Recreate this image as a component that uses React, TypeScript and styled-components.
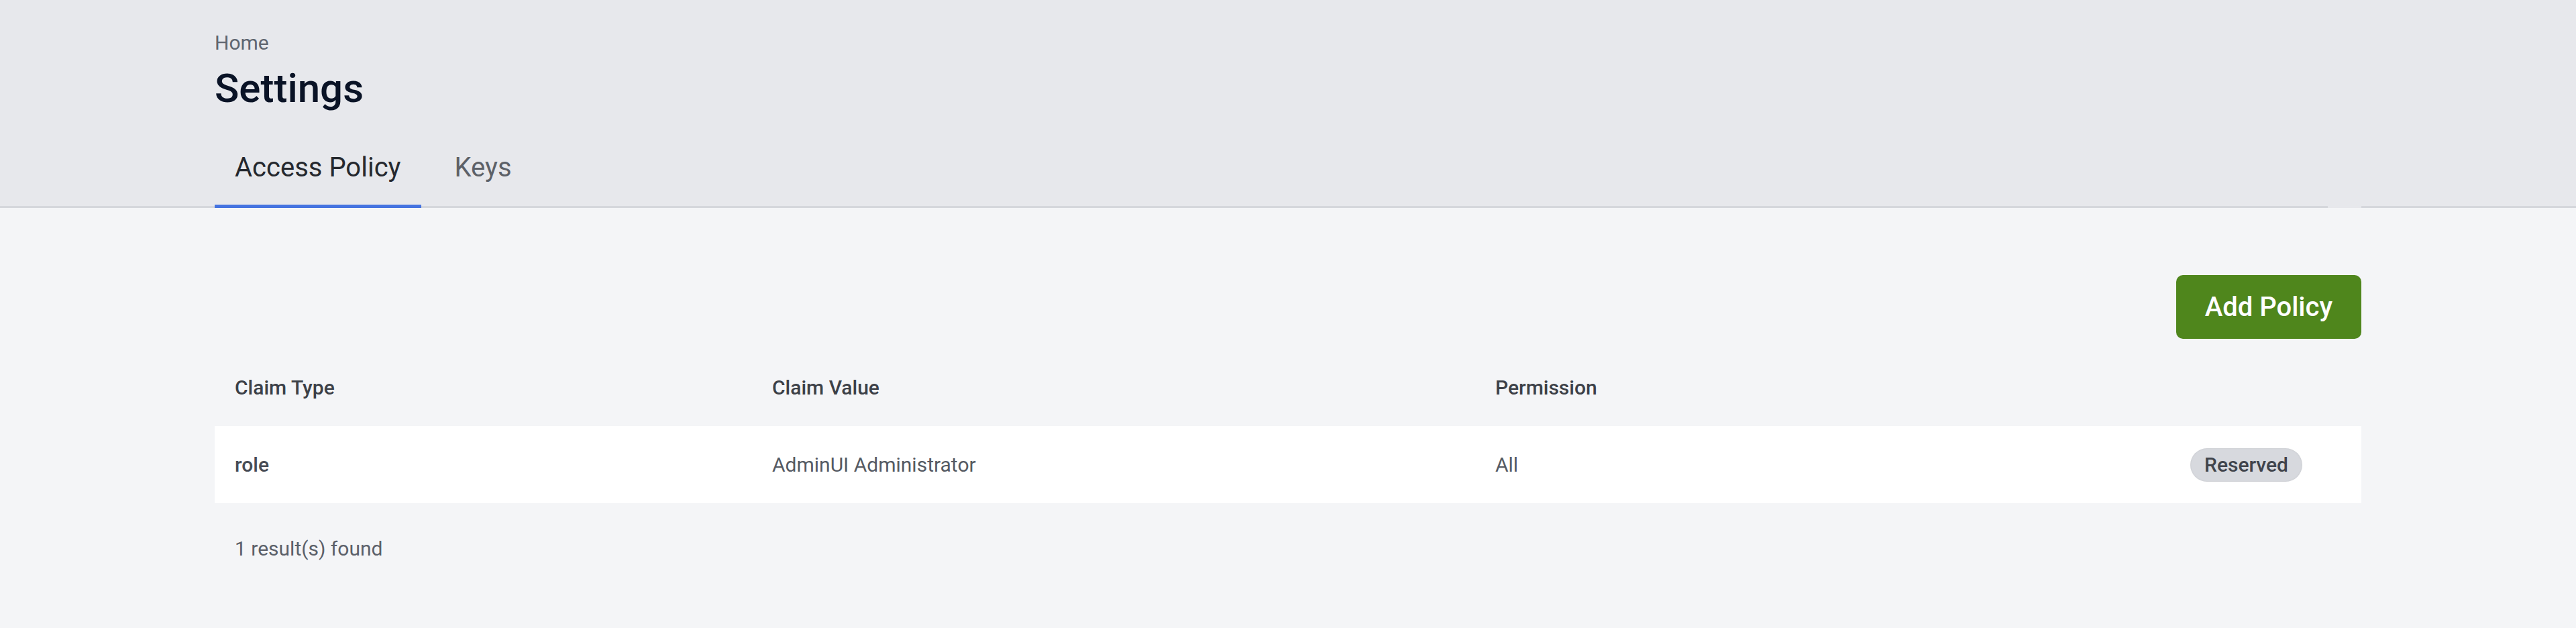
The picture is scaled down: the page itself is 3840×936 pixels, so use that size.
import React from "react";
import styled, { createGlobalStyle } from "styled-components";

const GlobalStyle = createGlobalStyle`
  html, body {
    margin: 0;
    padding: 0;
    background: #f4f5f7;
    font-family: Roboto, "Liberation Sans", Arial, sans-serif;
  }
  * { box-sizing: border-box; }
`;

const Page = styled.div`
  min-height: 936px;
  background: #f4f5f7;
  display: flex;
  flex-direction: column;
`;

const Header = styled.header`
  background: #e7e8ec;
  padding-top: 44px;
`;

const Container = styled.div`
  width: 3200px;
  margin: 0 auto;
`;

const Breadcrumb = styled.div`
  font-size: 30px;
  line-height: 40px;
  color: #5f6670;
`;

const Title = styled.h1`
  margin: 8px 0 0;
  font-size: 60px;
  line-height: 80px;
  font-weight: 500;
  color: #0a1326;
`;

const TabList = styled.div`
  margin-top: 48px;
  margin-bottom: -3px;
  display: flex;
  gap: 20px;
  position: relative;
  z-index: 1;
`;

const Tab = styled.button<{ $active?: boolean }>`
  appearance: none;
  background: none;
  border: 0;
  border-bottom: 5px solid ${(p) => (p.$active ? "#4573e0" : "transparent")};
  padding: 0 30px 25px;
  margin: 0;
  font-family: inherit;
  font-size: 40px;
  line-height: 60px;
  font-weight: 400;
  color: ${(p) => (p.$active ? "#25282e" : "#5d6168")};
  cursor: pointer;
`;

const Rule = styled.div`
  display: flex;
  height: 3px;
`;

const RuleLine = styled.div<{ $width?: number }>`
  background: #d5d7dc;
  ${(p) => (p.$width ? `width: ${p.$width}px;` : "flex: 1;")}
`;

const RuleGap = styled.div`
  width: 50px;
`;

const Main = styled.main`
  padding-top: 100px;
`;

const Toolbar = styled.div`
  display: flex;
  justify-content: flex-end;
  margin-bottom: 15px;
`;

const PrimaryButton = styled.button`
  appearance: none;
  border: 0;
  height: 95px;
  padding: 0 43px;
  border-radius: 10px;
  background: #4f861c;
  color: #ffffff;
  font-family: inherit;
  font-size: 40px;
  font-weight: 500;
  cursor: pointer;
`;

const TableGrid = styled.div`
  display: grid;
  grid-template-columns: 801px 1078px 1036px 1fr;
`;

const Row = styled.div<{ $body?: boolean }>`
  display: contents;
`;

const Cell = styled.div<{ $head?: boolean; $strong?: boolean }>`
  height: 115px;
  display: flex;
  align-items: center;
  padding-left: 30px;
  font-size: 30px;
  background: ${(p) => (p.$head ? "transparent" : "#ffffff")};
  color: ${(p) => (p.$head ? "#3c4047" : p.$strong ? "#474c55" : "#555a63")};
  font-weight: ${(p) => (p.$head || p.$strong ? 500 : 400)};
`;

const Badge = styled.span`
  display: inline-flex;
  align-items: center;
  height: 50px;
  padding: 0 21px;
  border-radius: 25px;
  background: #d7d9de;
  box-shadow: inset 0 0 3px rgba(0, 0, 0, 0.08);
  font-size: 30px;
  font-weight: 500;
  color: #40444c;
`;

const Footer = styled.div`
  margin-top: 48px;
  padding-left: 30px;
  font-size: 30px;
  line-height: 40px;
  color: #5b6069;
`;

export default function App() {
  return (
    <>
      <GlobalStyle />
      <Page>
        <Header>
          <Container>
            <Breadcrumb>Home</Breadcrumb>
            <Title>Settings</Title>
            <TabList>
              <Tab $active>Access Policy</Tab>
              <Tab>Keys</Tab>
            </TabList>
          </Container>
          <Rule>
            <RuleLine />
            <RuleGap />
            <RuleLine $width={320} />
          </Rule>
        </Header>
        <Main>
          <Container>
            <Toolbar>
              <PrimaryButton>Add Policy</PrimaryButton>
            </Toolbar>
            <TableGrid>
              <Row>
                <Cell $head>Claim Type</Cell>
                <Cell $head>Claim Value</Cell>
                <Cell $head>Permission</Cell>
                <Cell $head />
              </Row>
              <Row $body>
                <Cell $strong>role</Cell>
                <Cell>AdminUI Administrator</Cell>
                <Cell>All</Cell>
                <Cell>
                  <Badge>Reserved</Badge>
                </Cell>
              </Row>
            </TableGrid>
            <Footer>1 result(s) found</Footer>
          </Container>
        </Main>
      </Page>
    </>
  );
}
